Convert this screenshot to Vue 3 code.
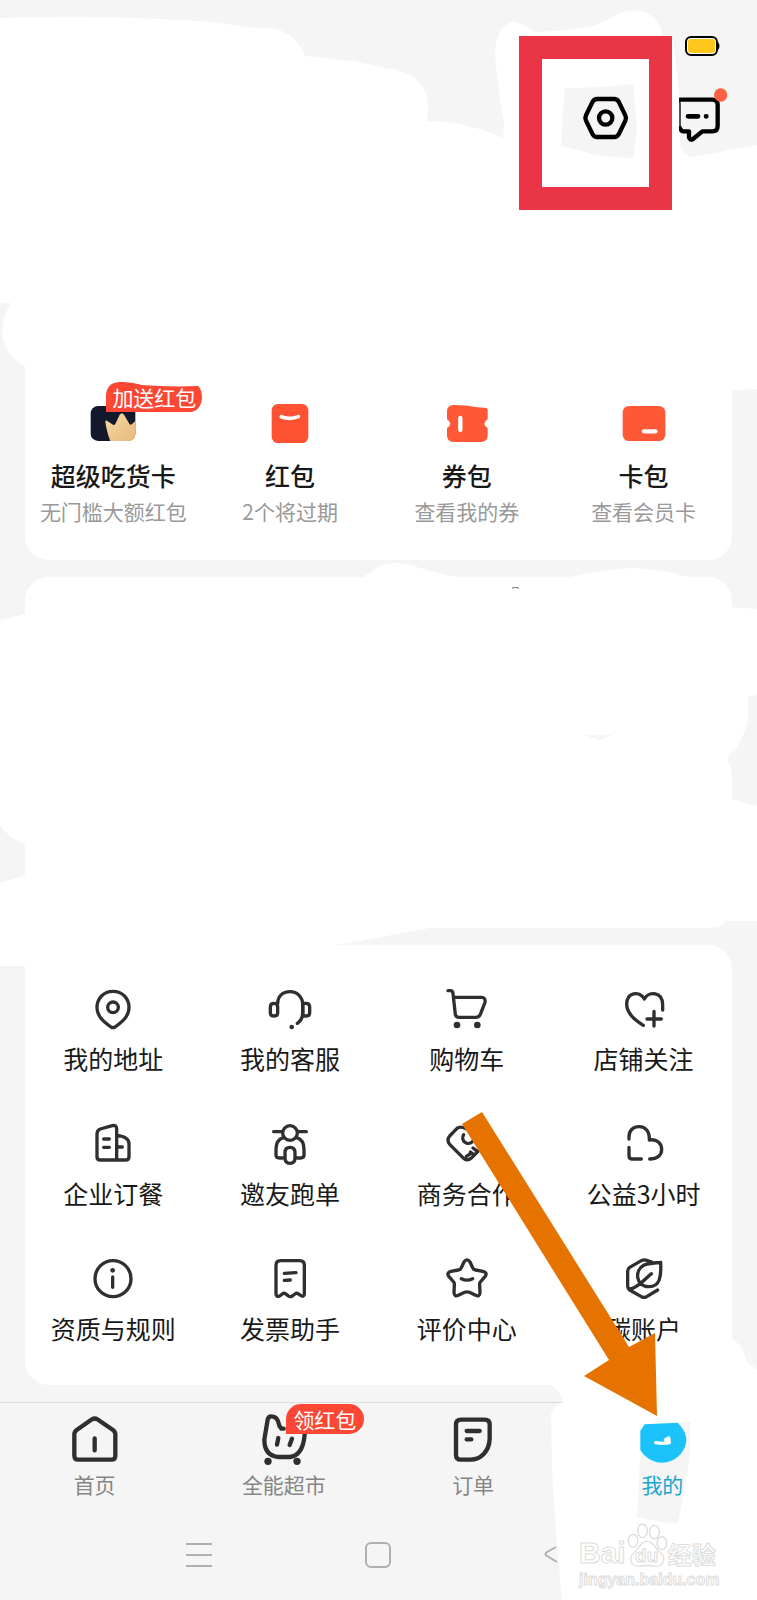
<script setup>
const benefits = [
  { title: '超级吃货卡', note: '无门槛大额红包', icon: 'crown', badge: '加送红包' },
  { title: '红包', note: '2个将过期', icon: 'packet' },
  { title: '券包', note: '查看我的券', icon: 'coupon' },
  { title: '卡包', note: '查看会员卡', icon: 'card' },
]

const services = [
  { label: '我的地址', box: '178 45 144 144', d: 'M250 64C278 64 298 85 298 112C298 137 282 152 256 171Q250 175 244 171C218 152 202 137 202 112C202 85 222 64 250 64ZM266 112A16 16 0 1 1 234 112A16 16 0 1 1 266 112Z' },
  { label: '我的客服', box: '708 45 144 144', d: 'M743 101C743 79 758 65 780 65C802 65 818 82 818 103V130Q817 151 802 160M732 100Q743 100 743 111V128Q743 138 732 138Q721 138 721 128V111Q721 100 732 100ZM828 100Q839 100 839 111V128Q839 138 828 138H819V100Z', dots: [[785, 171, 7]] },
  { label: '购物车', box: '158 45 144 144', d: 'M173 62H180Q187 62 188 70L195 133Q197 142 206 142H256Q266 142 270 133L284 97Q286 83 275 82H190', dots: [[200, 165, 10], [261, 165, 10]] },
  { label: '店铺关注', box: '688 45 144 144', d: 'M758 166C735 152 708 132 708 103C708 68 745 60 761 87C775 62 816 66 816 104V120M790 124V168M769 147H812' },
  { label: '企业订餐', box: '178 450 144 144', d: 'M262 570H212Q202 570 202 560V492Q202 481 212 477L248 467Q261 464 261 477V570H288Q298 570 298 560V520Q297 500 262 496M222 507H239M222 532H239M266 531H278' },
  { label: '邀友跑单', box: '708 450 144 144', d: 'M802 489A22 22 0 1 1 758 489A22 22 0 1 1 802 489ZM731 485H754M806 485H829M760 503C744 507 738 520 738 540V555Q738 564 748 564H758M800 503C816 507 822 520 822 540V555Q822 564 812 564H802M780 532Q795 532 795 548V564Q795 580 780 580Q765 580 765 564V548Q765 532 780 532Z' },
  { label: '商务合作', box: '158 450 144 144', d: 'M226 476Q210 467 200 475L178 498Q168 510 178 523L220 565Q232 574 242 565L284 523Q294 510 284 498L262 476Q250 467 240 476M247 492A17 17 0 1 1 220 494M228 559L239 552M240 546L250 554M248 534L262 545' },
  { label: '公益3小时', box: '688 450 144 144', d: 'M715 507V500C715 481 728 470 745 470C766 470 777 486 776 510C799 506 813 520 813 538C813 556 799 567 777 567M715 532V557Q715 567 725 567H752' },
  { label: '资质与规则', box: '178 135 144 144', d: 'M304 206A54 54 0 1 1 196 206A54 54 0 1 1 304 206ZM249 201V232', dots: [[249, 181, 7]] },
  { label: '发票助手', box: '708 135 144 144', d: 'M738 252V166Q738 152 752 152H809Q823 152 823 166V252Q822 262 813 257L804 251Q800 248 795 252L787 258Q780 262 774 257L766 251Q761 248 757 252L749 258Q739 262 738 252ZM763 190L798 188M763 211L781 210' },
  { label: '评价中心', box: '158 135 144 144', d: 'M221 156Q230 143 239 156L247 173Q249 179 256 180L278 184Q293 188 284 200L270 216Q267 220 268 226L269 248Q268 262 256 256L237 247Q230 244 223 247L204 256Q192 262 191 248L192 226Q193 220 190 216L176 200Q167 188 182 184L204 180Q211 179 213 173ZM213 206Q230 215 247 206' },
  { label: '碳账户', box: '688 135 144 144', d: 'M783 156L768 151Q760 148 752 152L717 172Q711 176 711 184V229Q711 236 717 240L752 260Q760 264 768 260L801 240M810 157C812 200 808 231 774 230C735 229 731 181 759 166C775 158 795 159 810 157ZM716 237C735 236 755 216 782 191' },
]

const tabs = [
  { label: '首页', icon: 'home' },
  { label: '全能超市', icon: 'market', badge: '领红包' },
  { label: '订单', icon: 'orders' },
  { label: '我的', icon: 'mine', active: true },
]
</script>

<template>
  <main class="page">
    <svg class="paint" viewBox="0 0 757 1600" preserveAspectRatio="none" aria-hidden="true">
      <g fill="#fff">
        <path d="M0 18Q100 15 180 20Q220 22 245 27L270 28Q295 31 305 56Q350 59 385 68Q426 72 428 105L427 121Q465 121 503 138L504 122Q498 90 495 55Q496 22 515 22Q527 25 534 32Q590 30 608 20Q630 4 650 15Q661 22 663 36H672Q681 90 680 145Q682 155 692 157L757 145V389L731 391L725 400H25V366Q4 355 2 333Q3 315 11 303H0Z" />
        <path d="M362 578Q377 567 385 564Q399 561 420 568Q442 575 465 578ZM565 578Q610 568 635 568Q665 570 692 578Z" />
        <path d="M0 620L26 614V844Q10 840 0 825ZM0 883L26 875V966H0ZM731 607L757 609V694L748 697V720Q742 745 727 760L700 765V700L731 650ZM731 799L757 806V921H726L718 929L700 910L731 890Z" />
        <path d="M25 900H460V928H430Q375 938 350 943L323 946V970H25Z" />
        <path d="M732 1338Q744 1347 747 1363Q752 1365 757 1370V1600H562L557 1545L552 1470L551 1413Q555 1405 563 1402L560 1393L552 1386L600 1340Z" />
      </g>
      <g fill="#f5f5f5">
        <path d="M565 88Q600 88 633 84L637 128L633 158Q600 157 582 151L561 146L563 110Z" />
        <path d="M727 760Q732 768 732 778V750Z" />
        <path d="M585 735H613L602 739Q599 741 596 739Z" />
        <path d="M650 1424L690 1422V1455Q684 1490 678 1523Q655 1522 637 1517L640 1460Z" />
      </g>
      <path d="M512 588Q515 587 519 588" fill="none" stroke="#7b6762" />
    </svg>

    <header class="header">
      <div class="status">
        <svg class="battery" viewBox="0 0 36 20" role="img" aria-label="电量">
          <rect x="1" y="1" width="31" height="18" rx="5" fill="#fff" stroke="#000" stroke-width="2" />
          <rect x="3" y="3" width="27" height="14" rx="3" fill="#ffc71c" />
          <path d="M33 6Q36 10 33 14Z" fill="#000" />
        </svg>
      </div>
      <div class="actions">
        <button class="action" type="button" aria-label="设置">
          <svg viewBox="276 222 144 144">
            <path d="M321 237H373Q381 237 386 245L406 286Q410 294 406 302L386 343Q381 351 373 351H321Q313 351 308 343L288 302Q284 294 288 286L308 245Q313 237 321 237ZM367 294A20 20 0 1 1 327 294A20 20 0 1 1 367 294Z" />
          </svg>
        </button>
        <button class="action" type="button" aria-label="消息">
          <svg viewBox="570 200 150 165">
            <path d="M573 238H670Q686 238 686 254V316Q686 333 670 333H640L612 356Q603 361 600 351V333H583Q577 333 573 324" />
            <path d="M572 236L573 252V330" stroke-width="4" />
            <path d="M597 288H627M651 288H652" stroke-width="14" />
            <circle cx="695" cy="224" r="20" class="alert" />
          </svg>
        </button>
      </div>
    </header>
    <div class="frame" aria-hidden="true"></div>

    <section class="panel benefits">
      <a v-for="item in benefits" :key="item.title" class="entry" href="#">
        <svg v-if="item.icon === 'crown'" class="icon" viewBox="208 90 144 144">
          <defs>
            <linearGradient id="gold" x1="0" y1="0" x2="1" y2="1">
              <stop offset="0" stop-color="#f5dba5" /><stop offset="1" stop-color="#e8b77c" />
            </linearGradient>
          </defs>
          <rect x="213" y="108" width="134" height="105" rx="22" fill="#14182c" />
          <path d="M257 156Q256 151 262 152L280 164Q285 167 288 160L300 134Q307 125 313 134L329 161Q332 167 337 162L347 153V191Q347 213 325 213H272Q262 190 257 156Z" fill="url(#gold)" />
        </svg>
        <svg v-else-if="item.icon === 'packet'" class="icon" viewBox="739 90 144 144">
          <rect x="756" y="102" width="110" height="117" rx="19" fill="#ff5233" />
          <path d="M785 140Q811 150 836 140" fill="none" stroke="#fff" stroke-width="11" stroke-linecap="round" />
        </svg>
        <svg v-else-if="item.icon === 'coupon'" class="icon" viewBox="188 90 144 144">
          <path d="M220 105Q260 105 285 111L318 114Q322 115 322 121V148Q312 154 312 161Q312 168 322 174V196Q322 216 302 216H220Q200 216 200 196V174Q210 168 210 161Q210 154 200 148V125Q200 105 220 105Z" fill="#ff5836" />
          <path d="M240 144V180" stroke="#fff" stroke-width="13" stroke-linecap="round" />
        </svg>
        <svg v-else class="icon" viewBox="720 90 144 144">
          <rect x="728" y="108" width="128" height="105" rx="19" fill="#ff5836" />
          <path d="M792 184H826" stroke="#fff" stroke-width="13" stroke-linecap="round" />
        </svg>
        <strong class="title">{{ item.title }}</strong>
        <span class="note">{{ item.note }}</span>
        <span v-if="item.badge" class="promo">
          <svg viewBox="258 35 288 89" preserveAspectRatio="none" aria-hidden="true">
            <path d="M258 124V75Q260 38 297 35Q335 34 365 44Q440 50 535 47Q546 58 546 83Q542 121 510 124Z" fill="#fb4733" />
          </svg>
          <span>{{ item.badge }}</span>
        </span>
      </a>
    </section>

    <section class="panel blank"></section>

    <section class="panel services">
      <a v-for="item in services" :key="item.label" class="service" href="#">
        <svg class="icon line" :viewBox="item.box" aria-hidden="true">
          <path :d="item.d" />
          <circle v-for="(dot, i) in item.dots" :key="i" :cx="dot[0]" :cy="dot[1]" :r="dot[2]" />
        </svg>
        <span>{{ item.label }}</span>
      </a>
    </section>

    <nav class="tabs">
      <a v-for="tab in tabs" :key="tab.label" class="tab" :class="{ active: tab.active }" href="#">
        <svg v-if="tab.icon === 'home'" class="glyph" viewBox="194 58 180 180">
          <path d="M222 198V134Q222 126 229 121L275 89Q283 84 291 89L338 121Q345 126 345 134V198Q345 210 333 210H234Q222 210 222 198ZM283 146V182" />
        </svg>
        <svg v-else-if="tab.icon === 'market'" class="glyph" viewBox="761 58 180 180">
          <path d="M850 117H843Q836 111 835 101Q831 81 815 80Q804 79 802 90L792 150Q792 198 835 202H868Q908 198 913 134M834 145L830 165M875 147L868 166" />
          <circle cx="803" cy="215" r="11" /><circle cx="890" cy="215" r="11" />
        </svg>
        <svg v-else-if="tab.icon === 'orders'" class="glyph" viewBox="190 58 180 180">
          <path d="M229 196V105Q229 90 244 90H315Q330 90 330 105V147C329 184 304 210 273 210H243Q229 210 229 196ZM261 124H300M261 149H275" />
        </svg>
        <svg v-else class="glyph solid" viewBox="758 58 180 180">
          <path d="M796 104L895 99Q921 125 921 152C918 190 885 219 850 219C815 219 790 195 783 180V123Z" fill="#1cc3fb" />
          <path d="M829 159Q853 163 870 159L868 145L858 151" fill="none" stroke="#fff" stroke-width="10" stroke-linecap="round" stroke-linejoin="round" />
        </svg>
        <span>{{ tab.label }}</span>
        <span v-if="tab.badge" class="tag">{{ tab.badge }}</span>
      </a>
    </nav>

    <footer class="system">
      <button type="button" aria-label="最近任务">
        <svg viewBox="0 0 28 28"><path d="M1 3H27M1 14H27M1 25H27" /></svg>
      </button>
      <button type="button" aria-label="主屏幕">
        <svg viewBox="0 0 28 28"><rect x="2" y="2" width="24" height="24" rx="5" /></svg>
      </button>
      <button type="button" aria-label="返回">
        <svg viewBox="0 0 28 28"><path d="M12 6L3 11Q0 13 3 15L13 21" /></svg>
      </button>
    </footer>

    <div class="watermark">
      <div class="brand">
        <span class="latin">Bai</span>
        <span class="paw">
          <svg viewBox="735 380 130 140" aria-hidden="true">
            <ellipse cx="757" cy="437" rx="15" ry="20" /><ellipse cx="786" cy="406" rx="15" ry="21" />
            <ellipse cx="823" cy="410" rx="15" ry="21" /><ellipse cx="846" cy="444" rx="15" ry="20" />
            <path d="M800 439C822 439 826 462 840 472C862 490 850 516 828 516Q800 511 774 516C750 514 740 492 762 472C776 460 780 439 800 439Z" />
          </svg>
          <span>du</span>
        </span>
        <span class="hanzi">经验</span>
      </div>
      <div class="site">jingyan.baidu.com</div>
    </div>

    <svg class="arrow" viewBox="0 0 195 304" aria-hidden="true">
      <path d="M20 0L167 235L193 221L195 304L122 264L147 248L0 12Z" fill="#e67300" />
    </svg>
  </main>
</template>

<style>
body {
  margin: 0;
  background: #f5f5f5;
}
</style>

<style scoped>
.page {
  position: relative;
  overflow: hidden;
  background: #f5f5f5;
  color: #191919;
  font-family: "Noto Sans CJK SC", "Liberation Sans", sans-serif;
}
.paint {
  position: absolute;
  inset: 0;
  width: 100%;
  height: 100%;
  z-index: 1;
}
a {
  color: inherit;
  text-decoration: none;
}
button {
  padding: 0;
  border: 0;
  background: none;
}
svg {
  display: block;
}
.header {
  position: relative;
  z-index: 2;
  height: 366px;
  box-sizing: border-box;
  padding: 36px 28px 0 0;
}
.status {
  display: flex;
  justify-content: flex-end;
  padding-right: 8px;
}
.battery {
  width: 36px;
  height: 20px;
}
.actions {
  display: flex;
  justify-content: flex-end;
  align-items: flex-end;
  gap: 49px;
  margin-top: 31px;
}
.action svg {
  width: 48px;
  height: 48px;
  fill: none;
  stroke: #000;
  stroke-width: 13;
  stroke-linecap: round;
  stroke-linejoin: round;
}
.action:last-child svg {
  width: 50px;
  height: 55px;
}
.action .alert {
  fill: #ff6044;
  stroke: none;
}
.frame {
  position: absolute;
  z-index: 3;
  top: 36px;
  right: 85px;
  width: 153px;
  height: 174px;
  box-sizing: border-box;
  border: 23px solid #e93546;
}
.panel {
  margin: 0 25px 17px;
  border-radius: 24px;
  background: #fff;
}
.benefits,
.services {
  position: relative;
  z-index: 2;
  display: grid;
  grid-template-columns: repeat(4, 1fr);
}
.benefits {
  padding: 34px 0 31px;
}
.blank {
  height: 351px;
}
.services {
  row-gap: 47px;
  padding: 40px 0 42px;
}
.entry,
.service {
  position: relative;
  display: flex;
  flex-direction: column;
  align-items: center;
  white-space: nowrap;
}
.icon {
  width: 48px;
  height: 48px;
}
.title {
  margin-top: 9px;
  font-size: 25px;
  font-weight: 500;
  line-height: 36px;
}
.note {
  color: #999;
  font-size: 21px;
  line-height: 36px;
}
.promo {
  position: absolute;
  top: -18px;
  left: 50%;
  width: 96px;
  height: 30px;
  margin-left: -7px;
  color: #fff;
  font-size: 21px;
  line-height: 30px;
  text-align: center;
}
.promo svg {
  position: absolute;
  inset: 0;
  width: 100%;
  height: 100%;
}
.promo span {
  position: relative;
}
.service {
  gap: 10px;
  font-size: 25px;
  line-height: 30px;
}
.line {
  fill: none;
  stroke: #2f2f2f;
  stroke-width: 10;
  stroke-linecap: round;
  stroke-linejoin: round;
}
.line circle,
.glyph circle {
  fill: #2f2f2f;
  stroke: none;
}
.tabs {
  display: grid;
  grid-template-columns: repeat(4, 1fr);
  padding: 6px 0 10px;
  border-top: 1px solid #dcdcdc;
}
.tab {
  position: relative;
  z-index: 2;
  display: flex;
  flex-direction: column;
  align-items: center;
  color: #858585;
  font-size: 21px;
  line-height: 30px;
}
.tab.active {
  color: #1ba6cf;
}
.glyph {
  width: 60px;
  height: 60px;
}
.glyph:not(.solid) {
  fill: none;
  stroke: #2f2f2f;
  stroke-width: 13;
  stroke-linecap: round;
  stroke-linejoin: round;
}
.tag {
  position: absolute;
  top: -5px;
  left: 50%;
  width: 78px;
  margin-left: 2px;
  border-radius: 15px 15px 15px 0;
  background: #fb4733;
  color: #fff;
  text-align: center;
}
.system {
  position: relative;
  z-index: 2;
  display: grid;
  grid-template-columns: repeat(3, 1fr);
  align-items: center;
  justify-items: center;
  height: 91px;
  padding: 0 109px;
}
.system svg {
  width: 28px;
  height: 28px;
  fill: none;
  stroke: #b0b0b0;
  stroke-width: 2;
}
.watermark {
  position: absolute;
  z-index: 3;
  right: 40px;
  bottom: 8px;
  width: 138px;
  color: #fff;
  font-family: "Liberation Sans", sans-serif;
  font-weight: 700;
  -webkit-text-stroke: 1px #ddd;
}
.brand {
  display: flex;
  align-items: flex-end;
  height: 46px;
}
.latin {
  font-size: 30px;
  line-height: 30px;
}
.paw {
  position: relative;
  width: 42px;
  height: 46px;
  font-size: 19px;
  text-align: center;
}
.paw svg {
  position: absolute;
  inset: 0;
  width: 100%;
  height: 100%;
  fill: #fff;
  stroke: #ddd;
  stroke-width: 4;
}
.paw span {
  position: relative;
  line-height: 68px;
}
.hanzi {
  font-family: "Noto Sans CJK SC", sans-serif;
  font-size: 24px;
  line-height: 28px;
}
.site {
  font-size: 16px;
  line-height: 24px;
}
.arrow {
  position: absolute;
  z-index: 4;
  right: 100px;
  bottom: 184px;
  width: 195px;
  height: 304px;
}
</style>
